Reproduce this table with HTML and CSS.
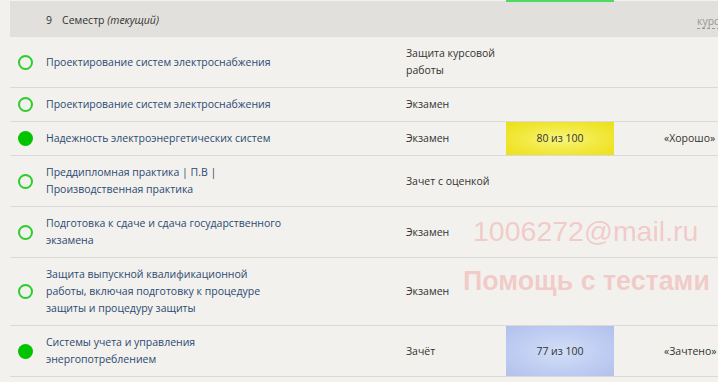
FILE: index.html
```html
<!DOCTYPE html>
<html lang="ru">
<head>
<meta charset="utf-8">
<link rel="stylesheet" href="styles.css">
</head>
<body>
<div class="page">
  <div class="head">
    <div class="head-title"><span class="num">9</span>Семестр <i>(текущий)</i></div>
    <div class="head-score"></div>
    <div class="head-link"><span>курсовые</span></div>
  </div>
  <table class="grid">
    <colgroup>
      <col class="c-ico"><col class="c-name"><col class="c-type"><col class="c-score"><col class="c-grade">
    </colgroup>
    <tr>
      <td class="ico"><span class="dot"></span></td>
      <td class="name">Проектирование систем электроснабжения</td>
      <td class="type">Защита курсовой работы</td>
      <td class="score"></td>
      <td class="grade"></td>
    </tr>
    <tr>
      <td class="ico"><span class="dot"></span></td>
      <td class="name">Проектирование систем электроснабжения</td>
      <td class="type">Экзамен</td>
      <td class="score"></td>
      <td class="grade"></td>
    </tr>
    <tr>
      <td class="ico"><span class="dot full"></span></td>
      <td class="name">Надежность электроэнергетических систем</td>
      <td class="type">Экзамен</td>
      <td class="score yellow">80 из 100</td>
      <td class="grade">«Хорошо»</td>
    </tr>
    <tr>
      <td class="ico"><span class="dot"></span></td>
      <td class="name">Преддипломная практика | П.В | Производственная практика</td>
      <td class="type">Зачет с оценкой</td>
      <td class="score"></td>
      <td class="grade"></td>
    </tr>
    <tr>
      <td class="ico"><span class="dot"></span></td>
      <td class="name">Подготовка к сдаче и сдача государственного экзамена</td>
      <td class="type">Экзамен</td>
      <td class="score"></td>
      <td class="grade"></td>
    </tr>
    <tr>
      <td class="ico"><span class="dot"></span></td>
      <td class="name">Защита выпускной квалификационной работы, включая подготовку к процедуре защиты и процедуру защиты</td>
      <td class="type">Экзамен</td>
      <td class="score"></td>
      <td class="grade"></td>
    </tr>
    <tr>
      <td class="ico"><span class="dot full"></span></td>
      <td class="name">Системы учета и управления энергопотреблением</td>
      <td class="type">Зачёт</td>
      <td class="score blue">77 из 100</td>
      <td class="grade">«Зачтено»</td>
    </tr>
  </table>
  <div class="wm wm1">1006272@mail.ru</div>
  <div class="wm wm2">Помощь с тестами</div>
</div>
</body>
</html>
```

FILE: styles.css
```css
html, body {
  margin: 0;
  padding: 0;
  background: #f2f1ed;
  overflow: hidden;
}
body {
  font-family: "Open Sans", "Noto Sans", sans-serif;
  font-size: 10.5px;
  color: #333;
}
.page {
  position: relative;
  width: 718px;
  height: 382px;
  overflow: hidden;
  padding-left: 10px;
  box-sizing: border-box;
}
.head {
  display: flex;
  height: 36px;
  margin-top: 1px;
  background: #e1e0dc;
  width: 800px;
  position: relative;
}
.head-title {
  width: 496px;
  flex: none;
  padding-left: 36px;
  line-height: 39px;
  color: #333;
  box-sizing: border-box;
}
.head-title .num {
  margin-right: 10px;
}
.head-score {
  width: 108px;
  flex: none;
  border-top: 2px solid #4cdb5c;
  margin-top: -1px;
}
.head-link {
  padding-left: 83px;
  line-height: 40px;
  color: #999;
  white-space: nowrap;
}
.head-link span {
  border-bottom: 1px dashed #999;
}
.grid {
  border-collapse: collapse;
  table-layout: fixed;
  width: 808px;
}
.c-ico { width: 36px; }
.c-name { width: 360px; }
.c-type { width: 100px; }
.c-score { width: 108px; }
.c-grade { width: 204px; }
.grid td {
  border-bottom: 1px solid #dad9d5;
  line-height: 17px;
  padding: 8px 0;
  vertical-align: middle;
}
.grid td.ico {
  padding-left: 8px;
}
.dot {
  display: block;
  width: 11px;
  height: 11px;
  border: 2px solid #2ccd2c;
  border-radius: 50%;
}
.dot.full {
  width: 15px;
  height: 15px;
  border: none;
  background: #00c400;
}
.grid td.name {
  color: #2c4a73;
  padding-right: 116px;
}
.grid td.type {
  color: #333;
  padding-right: 2px;
}
.grid td.score {
  text-align: center;
  color: #333;
}
.score.yellow {
  background: radial-gradient(ellipse at center, #f8f57e 0%, #f1e83c 55%, #ebdf18 100%);
}
.score.blue {
  background: radial-gradient(ellipse at center, #d1def6 0%, #c0cdf2 55%, #b2c0ec 100%);
}
.grid td.grade {
  padding-left: 50px;
  color: #333;
  white-space: nowrap;
}
.wm {
  position: absolute;
  font-family: "Liberation Sans", Arial, sans-serif;
  color: rgba(240, 120, 120, 0.32);
  white-space: nowrap;
  pointer-events: none;
}
.wm1 {
  left: 473px;
  top: 215px;
  font-size: 28.5px;
}
.wm2 {
  left: 463px;
  top: 266px;
  font-size: 26.8px;
  font-weight: bold;
}
```
